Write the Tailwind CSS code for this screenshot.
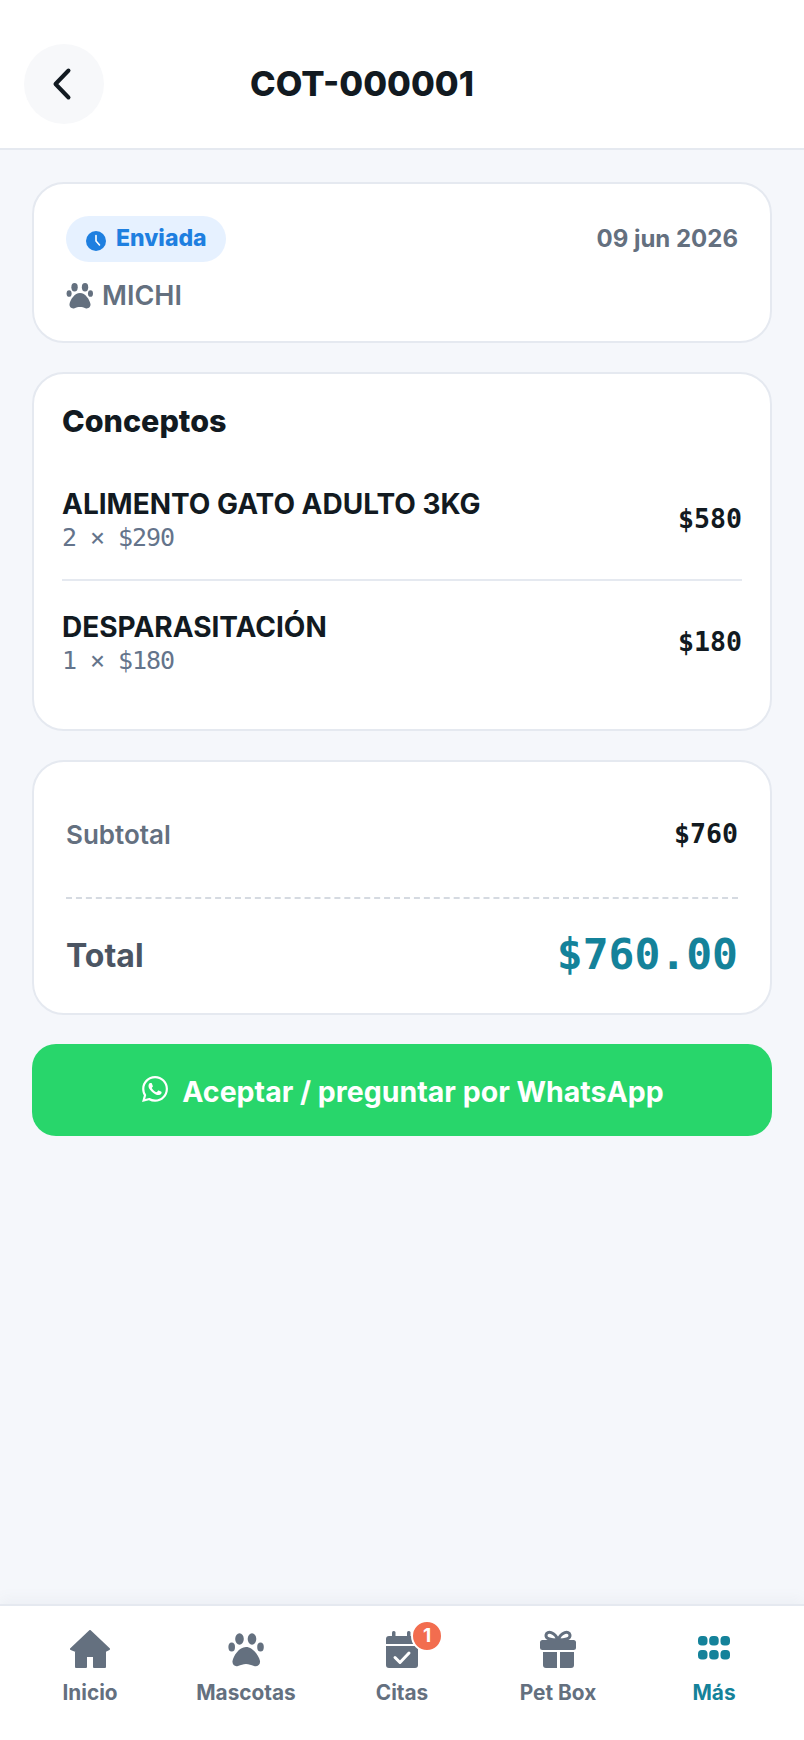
<!DOCTYPE html>
<html>
  <head>
    <meta charset="UTF-8" />
    <meta name="viewport" content="width=device-width, initial-scale=1.0" />
    <script src="https://cdn.jsdelivr.net/npm/@tailwindcss/browser@4"></script>
  </head>
  <body class="bg-[#f5f7fb] font-[Inter,sans-serif]">
    <div class="flex flex-col h-[1740px] w-[804px] overflow-hidden">
      <!-- header -->
      <header class="h-[150px] shrink-0 bg-white border-b-2 border-[#e5e9f0] flex items-end pb-[24px] pl-[24px]">
        <button class="w-[80px] h-[80px] rounded-full bg-[#f7f8fa] flex items-center justify-center">
          <svg width="40" height="40" viewBox="0 0 40 40" fill="none" stroke="#121a21" stroke-width="4" stroke-linecap="round" stroke-linejoin="round"><path d="M24.5 6.5 L11.5 20 L24.5 33.5"/></svg>
        </button>
        <h1 class="ml-[146px] mb-[20px] text-[34.5px] leading-[40px] font-extrabold text-[#121a21]">COT-000001</h1>
      </header>

      <main class="flex-1 flex flex-col gap-[29px] px-[32px] pt-[32px]">
        <!-- status -->
        <section class="h-[161px] bg-white border-2 border-[#e5e9f0] rounded-[32px] px-[32px] pt-[32px]">
          <div class="flex items-center justify-between">
            <span class="h-[46px] w-[160px] rounded-full bg-[#e6f1ff] flex items-center pl-[20px] gap-[10px] text-[23px] font-extrabold text-[#1e7fe0]">
              <svg width="20" height="20" viewBox="0 0 20 20" class="mt-[3px]"><circle cx="10" cy="10" r="10" fill="#1e7fe0"/><path d="M10 4.5V10l3.5 4" fill="none" stroke="#fff" stroke-width="1.6" stroke-linecap="round" stroke-linejoin="round"/></svg>
              <span class="mt-[-2px]">Enviada</span>
            </span>
            <span class="text-[24px] font-bold text-[#64707f]">09 jun 2026</span>
          </div>
          <div class="flex items-center gap-[8px] mt-[12px] text-[27px] leading-[44px] font-semibold text-[#64707f]">
            <svg width="28" height="26" viewBox="5 7 31 31" fill="#64707f"><ellipse cx="14" cy="12" rx="3.8" ry="5"/><ellipse cx="26.5" cy="12" rx="3.8" ry="5"/><ellipse cx="7.5" cy="19.5" rx="3" ry="4"/><ellipse cx="33" cy="19.5" rx="3" ry="4"/><path d="M20.5 19C27 19 32 27 33 32C33.5 36 30 38 27 37C25 36 23 35.5 20.5 35.5C18 35.5 16 36 14 37C11 38 7.500 36 8 32C9 27 14 19 20.5 19Z"/></svg>
            MICHI
          </div>
        </section>

        <!-- concepts -->
        <section class="h-[359px] bg-white border-2 border-[#e5e9f0] rounded-[32px] px-[28px] pt-[28px]">
          <h2 class="text-[30.5px] leading-[38px] font-extrabold text-[#121a21] mb-[19px]">Conceptos</h2>
          <div class="h-[122px] flex items-center justify-between border-b-2 border-[#e5e9f0]">
            <div class="pt-[2px]">
              <div class="text-[28px] leading-[34px] font-bold text-[#121a21]">ALIMENTO GATO ADULTO 3KG</div>
              <div class="text-[25px] leading-[33px] tracking-[-1.05px] text-[#64748b] font-['DejaVu_Sans_Mono',monospace]">2 × $290</div>
            </div>
            <div class="text-[26.6px] font-bold text-[#121a21] font-['DejaVu_Sans_Mono',monospace]">$580</div>
          </div>
          <div class="h-[122px] flex items-center justify-between">
            <div class="pt-[2px]">
              <div class="text-[28px] leading-[34px] font-bold text-[#121a21]">DESPARASITACIÓN</div>
              <div class="text-[25px] leading-[33px] tracking-[-1.05px] text-[#64748b] font-['DejaVu_Sans_Mono',monospace]">1 × $180</div>
            </div>
            <div class="text-[26.6px] font-bold text-[#121a21] font-['DejaVu_Sans_Mono',monospace]">$180</div>
          </div>
        </section>

        <!-- totals -->
        <section class="h-[255px] bg-white border-2 border-[#e5e9f0] rounded-[32px] px-[32px]">
          <div class="h-[137px] flex items-center justify-between border-b-2 border-dashed border-[#d5dae1] pt-[9px]">
            <span class="text-[26px] font-semibold text-[#64707f]">Subtotal</span>
            <span class="text-[26.6px] font-semibold text-[#121a21] font-['DejaVu_Sans_Mono',monospace]">$760</span>
          </div>
          <div class="h-[110px] flex items-center justify-between">
            <span class="text-[32px] font-bold text-[#4b5563] pt-[3px]">Total</span>
            <span class="text-[43px] font-bold text-[#14829a] font-['DejaVu_Sans_Mono',monospace]">$760.00</span>
          </div>
        </section>

        <!-- whatsapp -->
        <button class="h-[92px] bg-[#28d66b] rounded-[24px] flex items-center justify-center gap-[14px] pl-[2px] text-[28.5px] font-bold text-white">
          <svg width="26" height="26" viewBox="0 0 24 24" fill="#fff" class="mb-[3px]"><path d="M17.472 14.382c-.297-.149-1.758-.867-2.03-.967-.273-.099-.471-.148-.67.15-.197.297-.767.966-.94 1.164-.173.199-.347.223-.644.075-.297-.15-1.255-.463-2.39-1.475-.883-.788-1.48-1.761-1.653-2.059-.173-.297-.018-.458.13-.606.134-.133.298-.347.446-.52.149-.174.198-.298.298-.497.099-.198.05-.371-.025-.52-.075-.149-.669-1.612-.916-2.207-.242-.579-.487-.5-.669-.51-.173-.008-.371-.01-.57-.01-.198 0-.52.074-.792.372-.272.297-1.04 1.016-1.04 2.479 0 1.462 1.065 2.875 1.213 3.074.149.198 2.096 3.2 5.077 4.487.709.306 1.262.489 1.694.625.712.227 1.36.195 1.871.118.571-.085 1.758-.719 2.006-1.413.248-.694.248-1.289.173-1.413-.074-.124-.272-.198-.57-.347m-5.421 7.403h-.004a9.87 9.87 0 01-5.031-1.378l-.361-.214-3.741.982.998-3.648-.235-.374a9.86 9.86 0 01-1.51-5.26c.001-5.45 4.436-9.884 9.888-9.884 2.64 0 5.122 1.03 6.988 2.898a9.825 9.825 0 012.893 6.994c-.003 5.45-4.437 9.884-9.885 9.884m8.413-18.297A11.815 11.815 0 0012.05 0C5.495 0 .16 5.335.157 11.892c0 2.096.547 4.142 1.588 5.945L.057 24l6.305-1.654a11.882 11.882 0 005.683 1.448h.005c6.554 0 11.89-5.335 11.893-11.893a11.821 11.821 0 00-3.48-8.413Z"/></svg>
          <span class="pt-[5px]">Aceptar / preguntar por WhatsApp</span>
        </button>
      </main>

      <!-- bottom nav -->
      <nav class="h-[136px] shrink-0 bg-white border-t-2 border-[#e5e9f0] shadow-[0_-6px_12px_rgba(100,116,139,0.05)] grid grid-cols-5 px-[12px] pt-[24px]">
        <a class="flex flex-col items-center text-[20.8px] leading-[24px] font-bold text-[#64707f]">
          <svg width="42" height="40" viewBox="0 0 42 40" fill="#64707f" stroke="#64707f" stroke-width="2" stroke-linejoin="round" class="mb-[11px]"><path d="M21 1 L2 19 L7 21 V37 H17 V26 H25 V37 H36 V21 L40 19 Z"/></svg>
          Inicio
        </a>
        <a class="flex flex-col items-center text-[20.8px] leading-[24px] font-bold text-[#64707f]">
          <svg width="40" height="40" viewBox="0 0 40 40" fill="#64707f" class="mb-[11px]"><ellipse cx="13.500" cy="9" rx="4.300" ry="5.800"/><ellipse cx="26" cy="9" rx="4.300" ry="5.800"/><ellipse cx="5.700" cy="17" rx="3.300" ry="4.500"/><ellipse cx="34.500" cy="17" rx="3.300" ry="4.500"/><path d="M20 17C27 17 33 26 34 31C34.500 35 31 37 28 36C25 35 23 34 20 34C17 34 15 35 12 36C9 37 6 35 6.500 31C7.500 26 13 17 20 17Z"/></svg>
          Mascotas
        </a>
        <a class="relative flex flex-col items-center text-[20.8px] leading-[24px] font-bold text-[#64707f]">
          <svg width="40" height="40" viewBox="0 0 40 40" class="mb-[11px]"><rect x="10" y="1" width="3.500" height="7" rx="1.500" fill="#64707f"/><rect x="25" y="1" width="3.500" height="7" rx="1.500" fill="#64707f"/><path d="M4 14V9Q4 6 7 6H33Q36 6 36 9V14Z" fill="#64707f"/><path d="M4 16H36V35Q36 38 33 38H7Q4 38 4 35Z" fill="#64707f"/><path d="M13 27.500l5 5 9-9.500" fill="none" stroke="#fff" stroke-width="3" stroke-linecap="round" stroke-linejoin="round"/></svg>
          Citas
          <span class="absolute left-[87px] top-[-10px] w-[32px] h-[32px] rounded-full bg-[#f26d4f] border-2 border-white flex items-center justify-center text-[19px] font-bold text-white">1</span>
        </a>
        <a class="flex flex-col items-center text-[20.8px] leading-[24px] font-bold text-[#64707f]">
          <svg width="40" height="40" viewBox="0 0 40 40" fill="#64707f" class="mb-[11px]"><path d="M20 10C17 2 9 0 8 5C7.500 9 13 10 20 10C27 10 32.500 9 32 5C31 0 23 2 20 10Z" fill="none" stroke="#64707f" stroke-width="3"/><rect x="2" y="10" width="36" height="10" rx="2.500"/><path d="M5 22H19V38H8Q5 38 5 35Z"/><path d="M22 22H36V35Q36 38 33 38H22Z"/></svg>
          Pet Box
        </a>
        <a class="flex flex-col items-center text-[20.8px] leading-[24px] font-bold text-[#14829a]">
          <svg width="40" height="40" viewBox="0 0 40 40" fill="#14829a" class="mb-[11px]"><rect x="4" y="6" width="9.500" height="9.500" rx="3.800"/><rect x="15.200" y="6" width="9.500" height="9.500" rx="3.800"/><rect x="26.500" y="6" width="9.500" height="9.500" rx="3.800"/><rect x="4" y="20" width="9.500" height="9.500" rx="3.800"/><rect x="15.200" y="20" width="9.500" height="9.500" rx="3.800"/><rect x="26.500" y="20" width="9.500" height="9.500" rx="3.800"/></svg>
          Más
        </a>
      </nav>
    </div>
  </body>
</html>
